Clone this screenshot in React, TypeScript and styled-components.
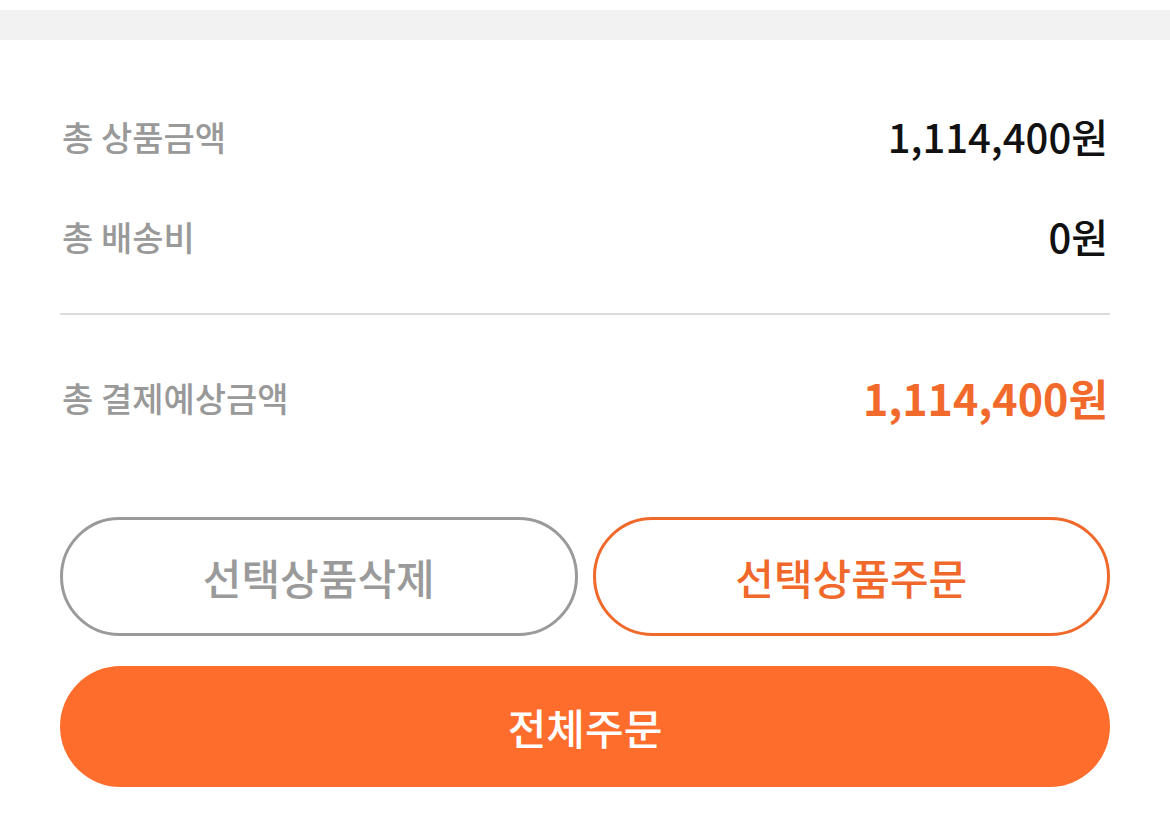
import React from "react";
import styled, { createGlobalStyle } from "styled-components";

const Global = createGlobalStyle`
  html, body { margin: 0; padding: 0; background: #fff; }
  body { font-family: "Noto Sans CJK KR", "Noto Sans", sans-serif; }
  * { box-sizing: border-box; }
`;

const Page = styled.div`
  width: 1170px;
  padding-top: 10px;
`;

const Band = styled.div`
  height: 30px;
  background: #f2f2f2;
`;

const Content = styled.div`
  padding: 47px 60px 0 60px;
  display: flex;
  flex-direction: column;
`;

const Row = styled.div`
  height: 100px;
  display: flex;
  align-items: center;
  justify-content: space-between;
`;

const Label = styled.span`
  font-size: 34px;
  color: #999;
  font-weight: 500;
  padding-left: 2px;
  margin-top: -2px;
`;

const Value = styled.span<{ $accent?: boolean }>`
  font-size: ${(p) => (p.$accent ? "43px" : "40px")};
  font-weight: ${(p) => (p.$accent ? 700 : 500)};
  color: ${(p) => (p.$accent ? "#f26a2b" : "#111")};
  padding-right: 2px;
  margin-top: -3px;
`;

const Divider = styled.hr`
  border: 0;
  height: 2px;
  background: #dcdcdc;
  margin: 26px 0 33px 0;
`;

const ButtonRow = styled.div`
  display: grid;
  grid-template-columns: 1fr 1fr;
  gap: 15px;
  margin-top: 69px;
`;

const OutlineButton = styled.button<{ $accent?: boolean }>`
  height: 119px;
  border-radius: 60px;
  background: #fff;
  border: 3px solid ${(p) => (p.$accent ? "#f0692b" : "#9a9a9a")};
  color: ${(p) => (p.$accent ? "#f0692b" : "#9a9a9a")};
  font-family: inherit;
  font-size: 42px;
  font-weight: 500;
  padding: 0;
`;

const MainButton = styled.button`
  margin-top: 30px;
  height: 121px;
  border-radius: 61px;
  border: 0;
  background: #ff6d2d;
  color: #fff;
  font-family: inherit;
  font-size: 42px;
  font-weight: 500;
`;

export default function App() {
  return (
    <>
      <Global />
      <Page>
        <Band />
        <Content>
          <Row>
            <Label>총 상품금액</Label>
            <Value>1,114,400원</Value>
          </Row>
          <Row>
            <Label>총 배송비</Label>
            <Value>0원</Value>
          </Row>
          <Divider />
          <Row>
            <Label>총 결제예상금액</Label>
            <Value $accent>1,114,400원</Value>
          </Row>
          <ButtonRow>
            <OutlineButton>선택상품삭제</OutlineButton>
            <OutlineButton $accent>선택상품주문</OutlineButton>
          </ButtonRow>
          <MainButton>전체주문</MainButton>
        </Content>
      </Page>
    </>
  );
}
